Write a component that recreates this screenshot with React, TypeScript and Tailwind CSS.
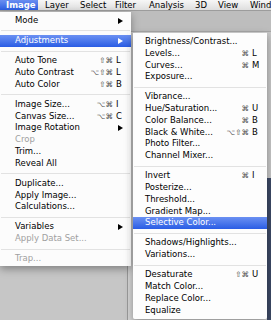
import clsx from "clsx";

type Item =
  | "sep"
  | {
      label: string;
      mods?: string;
      k?: string;
      sub?: boolean;
      disabled?: boolean;
      active?: boolean;
    };

const imageMenu: Item[] = [
  { label: "Mode", sub: true },
  "sep",
  { label: "Adjustments", sub: true, active: true },
  "sep",
  { label: "Auto Tone", mods: "⇧⌘", k: "L" },
  { label: "Auto Contrast", mods: "⌥⇧⌘", k: "L" },
  { label: "Auto Color", mods: "⇧⌘", k: "B" },
  "sep",
  { label: "Image Size...", mods: "⌥⌘", k: "I" },
  { label: "Canvas Size...", mods: "⌥⌘", k: "C" },
  { label: "Image Rotation", sub: true },
  { label: "Crop", disabled: true },
  { label: "Trim..." },
  { label: "Reveal All" },
  "sep",
  { label: "Duplicate..." },
  { label: "Apply Image..." },
  { label: "Calculations..." },
  "sep",
  { label: "Variables", sub: true },
  { label: "Apply Data Set...", disabled: true },
  "sep",
  { label: "Trap...", disabled: true },
];

const adjustMenu: Item[] = [
  { label: "Brightness/Contrast..." },
  { label: "Levels...", mods: "⌘", k: "L" },
  { label: "Curves...", mods: "⌘", k: "M" },
  { label: "Exposure..." },
  "sep",
  { label: "Vibrance..." },
  { label: "Hue/Saturation...", mods: "⌘", k: "U" },
  { label: "Color Balance...", mods: "⌘", k: "B" },
  { label: "Black & White...", mods: "⌥⇧⌘", k: "B" },
  { label: "Photo Filter..." },
  { label: "Channel Mixer..." },
  "sep",
  { label: "Invert", mods: "⌘", k: "I" },
  { label: "Posterize..." },
  { label: "Threshold..." },
  { label: "Gradient Map..." },
  { label: "Selective Color...", active: true },
  "sep",
  { label: "Shadows/Highlights..." },
  { label: "Variations..." },
  "sep",
  { label: "Desaturate", mods: "⇧⌘", k: "U" },
  { label: "Match Color..." },
  { label: "Replace Color..." },
  { label: "Equalize" },
];

function MenuRows({ items, indent }: { items: Item[]; indent: string }) {
  return (
    <>
      {items.map((it, i) =>
        it === "sep" ? (
          <div key={i} className="h-[8.4px] flex items-center px-[1px]">
            <div className="h-px w-full bg-[#e2e2e2]" />
          </div>
        ) : (
          <div
            key={i}
            className={clsx(
              "flex items-center h-[11.75px] leading-[11.75px] pr-[8px] whitespace-nowrap",
              indent,
              it.active
                ? "bg-linear-to-b from-[#6b90f2] to-[#2a5ce4] text-white"
                : it.disabled
                ? "text-[#a0a0a0]"
                : "text-black"
            )}
          >
            <span className="flex-1">{it.label}</span>
            {it.mods && (
              <span
                className={clsx(
                  "text-[7.5px] pr-[3px]",
                  it.active ? "text-white" : "text-[#444]"
                )}
              >
                {it.mods}
              </span>
            )}
            {(it.k || it.sub) && (
              <span className="w-[7px] flex justify-end items-center">
                {it.k && <span className="w-[7px]">{it.k}</span>}
                {it.sub && (
                  <svg width="5" height="6" viewBox="0 0 5 6">
                    <polygon points="0,0 5,3 0,6" fill="currentColor" />
                  </svg>
                )}
              </span>
            )}
          </div>
        )
      )}
    </>
  );
}

const bar = [
  { t: "Layer", w: "w-[35px]" },
  { t: "Select", w: "w-[35px]" },
  { t: "Filter", w: "w-[34px]" },
  { t: "Analysis", w: "w-[46px]" },
  { t: "3D", w: "w-[23px]" },
  { t: "View", w: "w-[32px]" },
  { t: "Wind", w: "w-[28px]" },
];

export default function App() {
  return (
    <div
      className="relative w-[271px] h-[320px] overflow-hidden bg-[#c5c5c5] flex flex-col text-[8.5px]"
      style={{ fontFamily: '"DejaVu Sans", Verdana, sans-serif' }}
    >
      {/* menu bar */}
      <div className="h-[11px] flex bg-linear-to-b from-[#f7f7f7] to-[#dedede] border-b border-[#9c9c9c] leading-[10px] whitespace-nowrap">
        <div className="w-[38px] pl-[6px] font-bold text-white bg-linear-to-b from-[#6a8ef0] to-[#2c5de2]">
          Image
        </div>
        {bar.map((b) => (
          <div key={b.t} className={clsx("pl-[7px] text-black shrink-0", b.w)}>
            {b.t}
          </div>
        ))}
      </div>

      {/* app behind the menus */}
      <div className="h-[21px] bg-[#bdbdbd] border-b border-[#a8a8a8]" />
      <div className="flex-1 flex">
        <div className="w-[128px] border-r border-[#9a9a9a] bg-[#c6c6c6]" />
        <div className="flex-1 bg-[#d4d4d4]" />
        <div className="w-[4px] flex flex-col">
          <div className="h-[146px] bg-[#c8c8c8]" />
          <div className="flex-1 bg-[#3d4a66]" />
        </div>
      </div>

      {/* Image menu */}
      <div className="absolute left-0 top-[12px] w-[131px] pt-[3px] pb-[1px] bg-white/95 shadow-[0_3px_8px_rgba(0,0,0,0.35)]">
        <MenuRows items={imageMenu} indent="pl-[15px]" />
      </div>

      {/* Adjustments submenu */}
      <div className="absolute left-[133px] top-[33px] w-[134px] pt-[3px] pb-[3px] bg-white/95 shadow-[0_3px_8px_rgba(0,0,0,0.35)] rounded-b-[2px]">
        <MenuRows items={adjustMenu} indent="pl-[12px]" />
      </div>
    </div>
  );
}
